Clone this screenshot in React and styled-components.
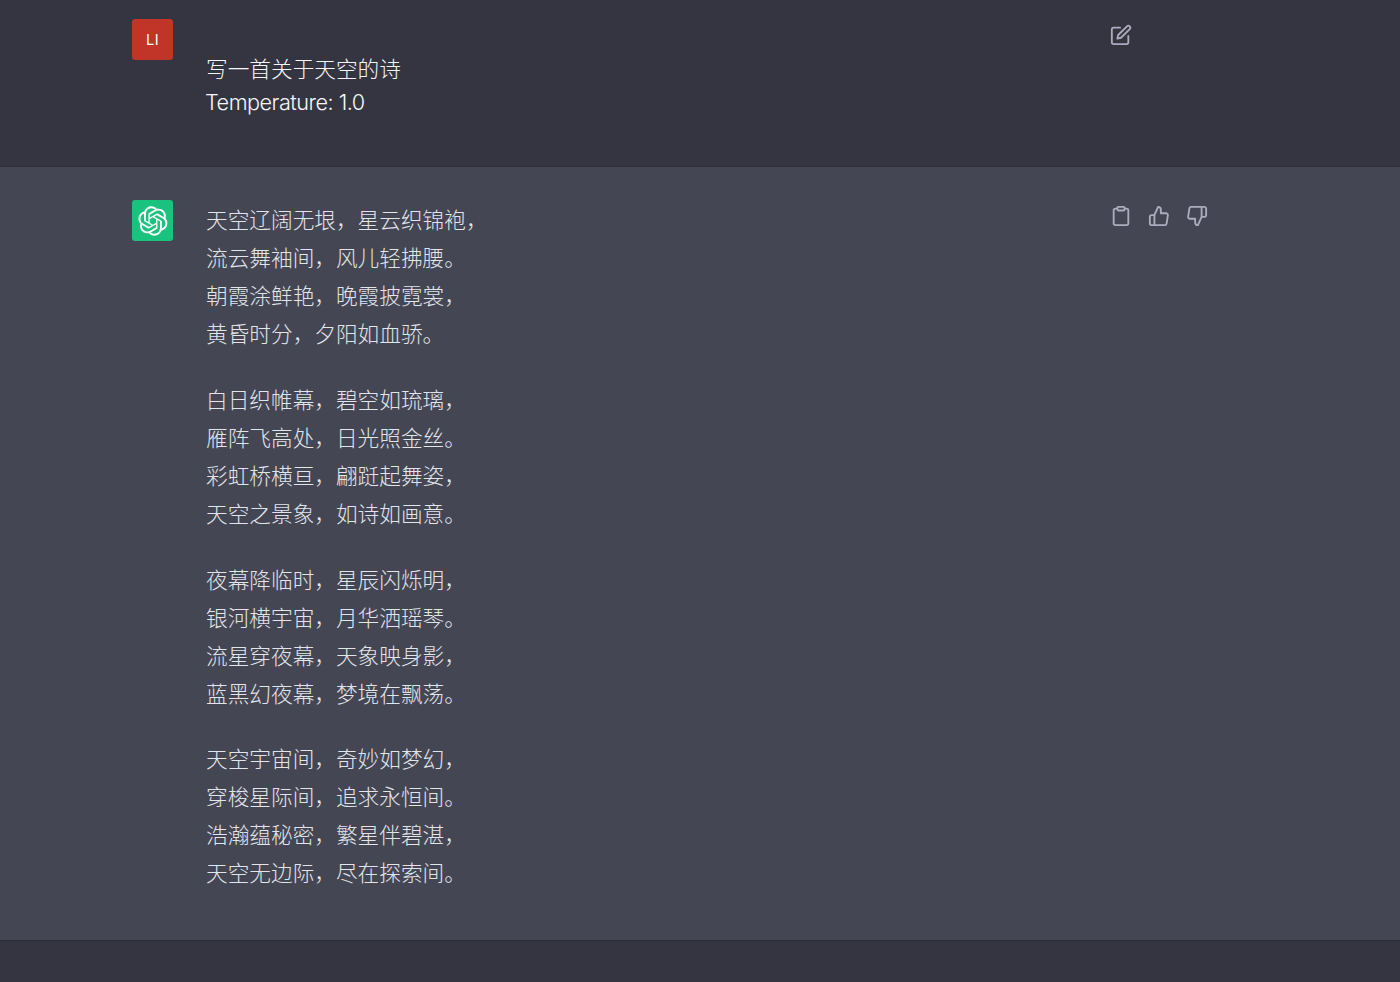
import React from 'react'
import styled, { createGlobalStyle } from 'styled-components'
import { FiEdit, FiClipboard, FiThumbsUp, FiThumbsDown } from 'react-icons/fi'

const GlobalStyle = createGlobalStyle`
  html, body {
    margin: 0;
    padding: 0;
    background: #343541;
  }
  body {
    font-family: "Inter", "Noto Sans CJK SC", sans-serif;
  }
`

const stanzas = [
  ['天空辽阔无垠\uFF0C星云织锦袍\uFF0C', '流云舞袖间\uFF0C风儿轻拂腰。', '朝霞涂鲜艳\uFF0C晚霞披霓裳\uFF0C', '黄昏时分\uFF0C夕阳如血骄。'],
  ['白日织帷幕\uFF0C碧空如琉璃\uFF0C', '雁阵飞高处\uFF0C日光照金丝。', '彩虹桥横亘\uFF0C翩跹起舞姿\uFF0C', '天空之景象\uFF0C如诗如画意。'],
  ['夜幕降临时\uFF0C星辰闪烁明\uFF0C', '银河横宇宙\uFF0C月华洒瑶琴。', '流星穿夜幕\uFF0C天象映身影\uFF0C', '蓝黑幻夜幕\uFF0C梦境在飘荡。'],
  ['天空宇宙间\uFF0C奇妙如梦幻\uFF0C', '穿梭星际间\uFF0C追求永恒间。', '浩瀚蕴秘密\uFF0C繁星伴碧湛\uFF0C', '天空无边际\uFF0C尽在探索间。'],
]

function OpenAILogo() {
  return (
    <svg width="30" height="30" viewBox="0 0 41 41" fill="none">
      <path
        fill="currentColor"
        d="M37.5324 16.8707C37.9808 15.5241 38.1363 14.0974 37.9886 12.6859C37.8409 11.2744 37.3934 9.91076 36.676 8.68622C35.6126 6.83404 33.9882 5.3676 32.0373 4.4985C30.0864 3.62941 27.9098 3.40259 25.8215 3.85078C24.8796 2.7893 23.7219 1.94125 22.4257 1.36341C21.1295 0.785575 19.7249 0.491269 18.3058 0.500197C16.1708 0.495044 14.0893 1.16803 12.3614 2.42214C10.6335 3.67624 9.34853 5.44666 8.6917 7.47815C7.30085 7.76286 5.98686 8.3414 4.8377 9.17505C3.68854 10.0087 2.73073 11.0782 2.02839 12.312C0.956464 14.1591 0.498905 16.2988 0.721698 18.4228C0.944492 20.5467 1.83612 22.5449 3.268 24.1293C2.81966 25.4759 2.66413 26.9026 2.81182 28.3141C2.95951 29.7256 3.40701 31.0892 4.12437 32.3138C5.18791 34.1659 6.8123 35.6322 8.76321 36.5013C10.7141 37.3704 12.8907 37.5973 14.9789 37.1492C15.9208 38.2107 17.0786 39.0587 18.3747 39.6366C19.6709 40.2144 21.0755 40.5087 22.4946 40.4998C24.6307 40.5054 26.7133 39.8321 28.4418 38.5772C30.1704 37.3223 31.4556 35.5506 32.1119 33.5179C33.5027 33.2332 34.8167 32.6547 35.9659 31.821C37.115 30.9874 38.0728 29.9178 38.7752 28.684C39.8458 26.8371 40.3023 24.6979 40.0789 22.5748C39.8556 20.4517 38.9639 18.4544 37.5324 16.8707ZM22.4978 37.8849C20.7443 37.8874 19.0459 37.2733 17.6994 36.1501C17.7601 36.117 17.8666 36.0586 17.936 36.0161L25.9004 31.4156C26.1003 31.3019 26.2663 31.137 26.3813 30.9378C26.4964 30.7386 26.5563 30.5124 26.5549 30.2825V19.0542L29.9213 20.998C29.9389 21.0068 29.9541 21.0198 29.9656 21.0359C29.977 21.052 29.9842 21.0707 29.9867 21.0902V30.3889C29.9842 32.375 29.1946 34.2791 27.7909 35.6841C26.3872 37.0892 24.4838 37.8806 22.4978 37.8849ZM6.39227 31.0064C5.51397 29.4888 5.19742 27.7107 5.49804 25.9832C5.55718 26.0187 5.66048 26.0818 5.73461 26.1244L13.699 30.7248C13.8975 30.8408 14.1233 30.902 14.3532 30.902C14.583 30.902 14.8088 30.8408 15.0073 30.7248L24.731 25.1103V28.9979C24.7321 29.0177 24.7283 29.0376 24.7199 29.0556C24.7115 29.0736 24.6988 29.0893 24.6829 29.1012L16.6317 33.7497C14.9096 34.7416 12.8643 35.0097 10.9447 34.4954C9.02506 33.9811 7.38785 32.7263 6.39227 31.0064ZM4.29707 13.6194C5.17156 12.0998 6.55279 10.9364 8.19885 10.3327C8.19885 10.4013 8.19491 10.5228 8.19491 10.6071V19.808C8.19351 20.0378 8.25334 20.2638 8.36823 20.4629C8.48312 20.6619 8.64893 20.8267 8.84863 20.9404L18.5723 26.5542L15.206 28.4979C15.1894 28.5089 15.1703 28.5155 15.1505 28.5173C15.1307 28.5191 15.1107 28.516 15.0924 28.5082L7.04046 23.8557C5.32135 22.8601 4.06716 21.2235 3.55289 19.3046C3.03862 17.3858 3.30624 15.3413 4.29707 13.6194ZM31.955 20.0556L22.2312 14.4411L25.5976 12.4981C25.6142 12.4872 25.6333 12.4805 25.6531 12.4787C25.6729 12.4769 25.6928 12.4801 25.7111 12.4879L33.7631 17.1364C34.9967 17.849 36.0017 18.8982 36.6606 20.1613C37.3194 21.4244 37.6047 22.849 37.4832 24.2684C37.3617 25.6878 36.8382 27.0432 35.9743 28.1759C35.1103 29.3086 33.9415 30.1717 32.6047 30.6641C32.6047 30.5947 32.6047 30.4733 32.6047 30.3889V21.188C32.6066 20.9586 32.5474 20.7328 32.4332 20.5338C32.319 20.3348 32.154 20.1698 31.955 20.0556ZM35.3055 15.0128C35.2464 14.9765 35.1431 14.9142 35.069 14.8717L27.1045 10.2712C26.906 10.1554 26.6803 10.0943 26.4504 10.0943C26.2206 10.0943 25.9948 10.1554 25.7963 10.2712L16.0726 15.8858V11.9982C16.0715 11.9783 16.0753 11.9585 16.0837 11.9405C16.0921 11.9225 16.1048 11.9068 16.1207 11.8949L24.1719 7.25025C25.4053 6.53903 26.8158 6.19376 28.2383 6.25482C29.6608 6.31589 31.0364 6.78077 32.2044 7.59508C33.3723 8.40939 34.2842 9.53945 34.8334 10.8531C35.3826 12.1667 35.5464 13.6095 35.3055 15.0128ZM14.2424 21.9419L10.8752 19.9981C10.8576 19.9893 10.8423 19.9763 10.8309 19.9602C10.8195 19.9441 10.8122 19.9254 10.8098 19.9058V10.6071C10.8107 9.18295 11.2173 7.78848 11.9819 6.58696C12.7466 5.38544 13.8377 4.42659 15.1275 3.82264C16.4173 3.21869 17.8524 2.99464 19.2649 3.1767C20.6775 3.35876 22.0089 3.93941 23.1034 4.85067C23.0427 4.88379 22.937 4.94215 22.8668 4.98473L14.9024 9.58517C14.7025 9.69878 14.5366 9.86356 14.4215 10.0626C14.3065 10.2616 14.2466 10.4877 14.2479 10.7175L14.2424 21.9419ZM16.071 17.9991L20.4018 15.4978L24.7325 17.9975V22.9985L20.4018 25.4983L16.071 22.9985V17.9991Z"
      />
    </svg>
  )
}

export default function App() {
  return (
    <>
      <GlobalStyle />
      <Page>
        <Row>
          <Avatar bg="#c03528" top={19}>LI</Avatar>
          <UserText>
            <Prompt>写一首关于天空的诗</Prompt>
            <Latin>Temperature: 1.0</Latin>
          </UserText>
          <Actions top={24}>
            <IconButton><FiEdit /></IconButton>
          </Actions>
        </Row>
        <Row alt>
          <Avatar bg="#19c37d" top={33}><OpenAILogo /></Avatar>
          <Answer>
            {stanzas.map((lines, i) => (
              <Stanza key={i}>
                {lines.map((line, j) => <div key={j}>{line}</div>)}
              </Stanza>
            ))}
          </Answer>
          <Actions top={38}>
            <IconButton><FiClipboard /></IconButton>
            <IconButton><FiThumbsUp /></IconButton>
            <IconButton><FiThumbsDown /></IconButton>
          </Actions>
        </Row>
        <Footer />
      </Page>
    </>
  )
}

const Page = styled.div`
  min-height: 100vh;
  display: flex;
  flex-direction: column;
  background: #343541;
`
const Row = styled.div`
  display: flex;
  align-items: flex-start;
  padding: 0 192px 0 132px;
  background: ${props => props.alt ? '#444654' : '#343541'};
  border-bottom: 1px solid #2c2d37;
`
const Avatar = styled.div`
  width: 41px;
  height: 41px;
  flex-shrink: 0;
  margin-top: ${props => props.top}px;
  margin-right: 33px;
  border-radius: 3px;
  background: ${props => props.bg};
  color: #fff;
  display: flex;
  align-items: center;
  justify-content: center;
  font-size: 14.5px;
  font-weight: 400;
  letter-spacing: 0.5px;
`
const UserText = styled.div`
  flex: 1;
  height: 166px;
  box-sizing: border-box;
  padding-top: 51px;
  font-family: "Noto Sans CJK SC", sans-serif;
  font-size: 21.67px;
  font-weight: 300;
  color: #f6f6fa;
`
const Prompt = styled.div`
  line-height: 34px;
`
const Latin = styled.div`
  font-family: "Inter", sans-serif;
  line-height: 35px;
  margin-left: -1px;
  letter-spacing: -0.5px;
`
const Answer = styled.div`
  flex: 1;
  padding: 33.3px 0 48.6px;
  font-family: "Noto Sans CJK SC", sans-serif;
  font-size: 21.67px;
  line-height: 38px;
  font-weight: 300;
  color: #e2e5ea;
`
const Stanza = styled.div`
  & + & {
    margin-top: 27.7px;
  }
`
const Actions = styled.div`
  width: 98px;
  flex-shrink: 0;
  display: flex;
  gap: 16px;
  margin-top: ${props => props.top}px;
`
const IconButton = styled.span`
  display: flex;
  color: #acacbe;
  font-size: 22px;
`
const Footer = styled.div`
  flex: 1;
`
